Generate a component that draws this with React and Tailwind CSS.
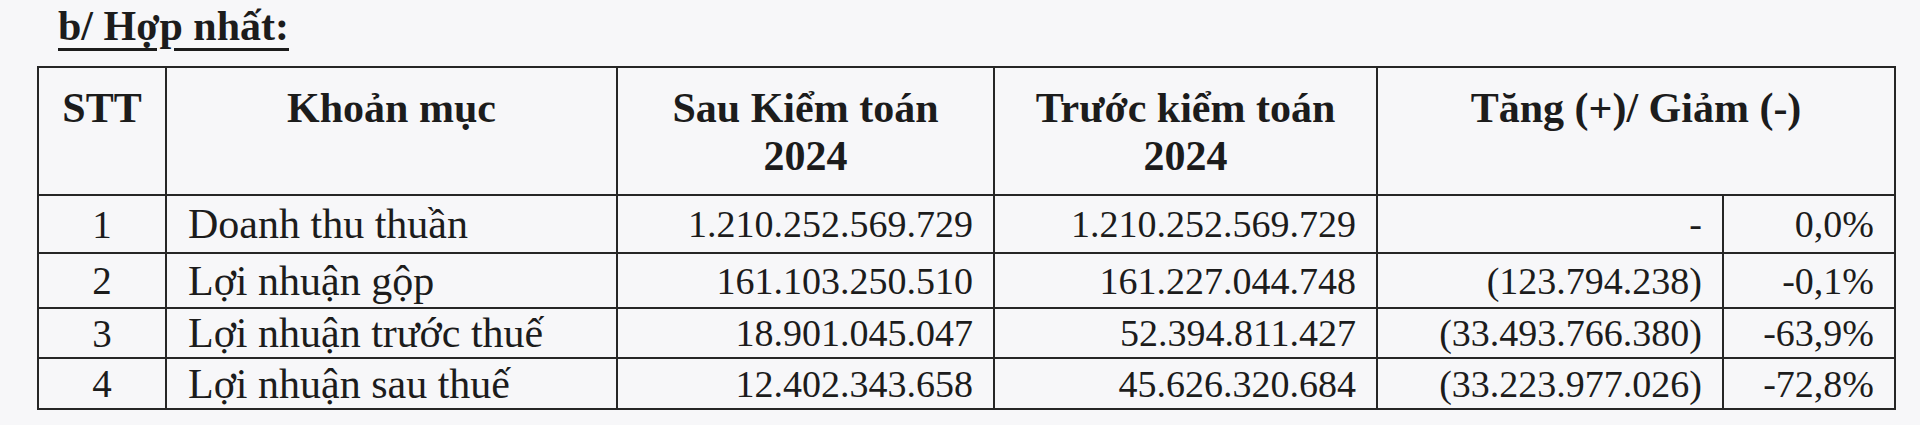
const ROWS = [
  { stt: '1', name: 'Doanh thu thuần', after: '1.210.252.569.729', before: '1.210.252.569.729', diff: '-', pct: '0,0%', h: 'h-[58px]' },
  { stt: '2', name: 'Lợi nhuận gộp', after: '161.103.250.510', before: '161.227.044.748', diff: '(123.794.238)', pct: '-0,1%', h: 'h-[55px]' },
  { stt: '3', name: 'Lợi nhuận trước thuế', after: '18.901.045.047', before: '52.394.811.427', diff: '(33.493.766.380)', pct: '-63,9%', h: 'h-[50px]' },
  { stt: '4', name: 'Lợi nhuận sau thuế', after: '12.402.343.658', before: '45.626.320.684', diff: '(33.223.977.026)', pct: '-72,8%', h: 'h-[51px]' },
]

const cell = 'border-r-2 border-b-2 border-[#262626]'

function HeadCell({ children, className = '' }) {
  return (
    <div className={`${cell} h-[128px] flex flex-col items-center pt-[16px] text-center font-bold text-[42px] leading-[48px] ${className}`}>
      {children}
    </div>
  )
}

function BodyCell({ children, h, align = 'right', size = 'text-[38px]' }) {
  const justify = align === 'center' ? 'justify-center' : align === 'left' ? 'justify-start pl-[21px]' : 'justify-end pr-[20px]'
  return (
    <div className={`${cell} ${h} flex items-center ${justify} ${size} leading-none whitespace-nowrap`}>
      {children}
    </div>
  )
}

export default function App() {
  return (
    <div
      className="w-full h-[425px] bg-[#f7f7f9] text-[#1c1c1c] overflow-hidden"
      style={{ fontFamily: '"Liberation Serif", "Times New Roman", serif' }}
    >
      <div className="pt-[5px] pl-[58px] text-[42px] leading-[42px] font-bold underline decoration-[3px] underline-offset-[8px]">
        b/ Hợp nhất:
      </div>

      <div className="mt-[19px] ml-[37px] w-fit grid grid-cols-[128px_451px_377px_383px_346px_172px] border-l-2 border-t-2 border-[#262626]">
        <HeadCell>STT</HeadCell>
        <HeadCell>Khoản mục</HeadCell>
        <HeadCell>
          <span>Sau Kiểm toán</span>
          <span>2024</span>
        </HeadCell>
        <HeadCell>
          <span>Trước kiểm toán</span>
          <span>2024</span>
        </HeadCell>
        <HeadCell className="col-span-2">Tăng (+)/ Giảm (-)</HeadCell>

        {ROWS.map((r) => (
          <div key={r.stt} className="contents">
            <BodyCell h={r.h} align="center" size="text-[39px]">{r.stt}</BodyCell>
            <BodyCell h={r.h} align="left" size="text-[42px]">{r.name}</BodyCell>
            <BodyCell h={r.h}>{r.after}</BodyCell>
            <BodyCell h={r.h}>{r.before}</BodyCell>
            <BodyCell h={r.h}>{r.diff}</BodyCell>
            <BodyCell h={r.h}>{r.pct}</BodyCell>
          </div>
        ))}
      </div>
    </div>
  )
}
